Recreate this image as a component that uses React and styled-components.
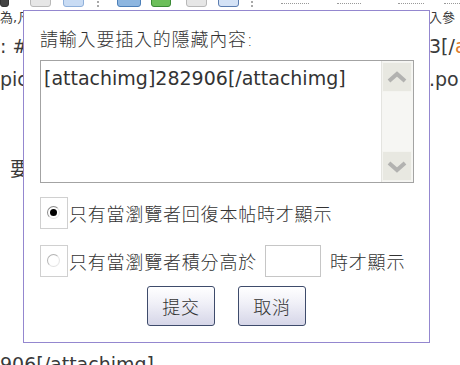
import styled, { createGlobalStyle } from "styled-components";

const GlobalStyle = createGlobalStyle`
  html, body {
    margin: 0;
    padding: 0;
    background: #ffffff;
    overflow: hidden;
  }
  body {
    font-family: "DejaVu Sans", "Noto Sans CJK TC", sans-serif;
    color: #333333;
  }
`;

const Page = styled.div`
  position: relative;
  width: 460px;
  height: 365px;
  overflow: hidden;
  background: #ffffff;
`;

//Background page behind the popup
const Backdrop = styled.div`
  display: flex;
  flex-direction: column;
`;

const Toolbar = styled.div`
  height: 7px;
  display: flex;
  align-items: flex-end;
  overflow: hidden;
`;

const ToolIcon = styled.span`
  flex: none;
  width: ${(p) => p.$w || 20}px;
  height: 18px;
  margin-left: ${(p) => p.$left || 0}px;
  border-radius: 3px;
  background: ${(p) => p.$bg || "#e6e6e6"};
  border: 1px solid ${(p) => p.$line || "#b8b8b8"};
  box-sizing: border-box;
`;

const Dots = styled.span`
  flex: none;
  width: 3px;
  height: 6px;
  margin-left: ${(p) => p.$left || 0}px;
  border-left: 2px dotted #a8a8a8;
`;

const Ticks = styled.span`
  flex: none;
  width: ${(p) => p.$w || 24}px;
  height: 3px;
  margin-left: ${(p) => p.$left || 0}px;
  border-top: 1px dotted #999999;
`;

const Line = styled.div`
  display: grid;
  grid-template-columns: 429px 1fr;
  margin-top: ${(p) => p.$top || 0}px;
  font-size: ${(p) => p.$size || 19}px;
  line-height: ${(p) => p.$lh || 24}px;
  color: #3a3a3a;
  white-space: nowrap;
  overflow: hidden;
`;

const Left = styled.span`
  padding-left: ${(p) => p.$indent || 0}px;
  overflow: hidden;
`;

const Accent = styled.span`
  color: #e07a2a;
`;

//Popup
const Dialog = styled.div`
  position: absolute;
  left: 23px;
  top: 10px;
  width: 407px;
  height: 333px;
  box-sizing: border-box;
  border: 1px solid #9487cf;
  background: #ffffff;
  padding: 17px 16px 0 16px;
  display: flex;
  flex-direction: column;
`;

const Title = styled.div`
  font-size: 18px;
  line-height: 24px;
  letter-spacing: 0.8px;
  font-weight: 300;
  color: #333333;
`;

const Field = styled.div`
  margin-top: 8px;
  width: 374px;
  height: 123px;
  box-sizing: border-box;
  border: 1px solid #a3a3a3;
  display: flex;
`;

const FieldText = styled.div`
  flex: 1;
  padding: 5px 3px;
  font-family: "DejaVu Sans", sans-serif;
  font-size: 19px;
  line-height: 24px;
  color: #333333;
`;

const ScrollBar = styled.div`
  width: 30px;
  padding: 1px 1px 1px 0;
  display: flex;
  flex-direction: column;
  background: #f6f6f3;
  border-left: 1px solid #e4e4e0;
`;

const ScrollButton = styled.div`
  height: 30px;
  box-sizing: border-box;
  background: #e8e8e1;
  border: 1px solid #f4f4f0;
  display: flex;
  align-items: center;
  justify-content: center;
`;

const Track = styled.div`
  flex: 1;
`;

const Option = styled.div`
  display: flex;
  align-items: center;
  margin-top: ${(p) => p.$top}px;
  height: 32px;
  font-size: 18px;
  letter-spacing: 0.8px;
  font-weight: 300;
  color: #333333;
`;

const RadioBox = styled.span`
  flex: none;
  width: 28px;
  height: 32px;
  box-sizing: border-box;
  border: 1px solid #d0d0d0;
  display: flex;
  align-items: center;
  padding: 0 0 2px 6px;
  margin-right: 1px;
`;

const RadioDot = styled.span`
  width: 13px;
  height: 13px;
  box-sizing: border-box;
  border-radius: 50%;
  border: 1px solid ${(p) => (p.$checked ? "#8c8c8c" : "#b4b4b4")};
  border-right-color: #e6e6e6;
  border-bottom-color: #e2e2e2;
  background: radial-gradient(circle, #ffffff 55%, #f0f0f0);
  display: flex;
  align-items: center;
  justify-content: center;

  &::after {
    content: "";
    display: ${(p) => (p.$checked ? "block" : "none")};
    width: 7px;
    height: 7px;
    border-radius: 50%;
    background: #000000;
  }
`;

const ScoreInput = styled.span`
  flex: none;
  width: 56px;
  height: 32px;
  box-sizing: border-box;
  border: 1px solid #c6c6c6;
  margin: 0 9px 0 8px;
`;

const Actions = styled.div`
  margin-top: 9px;
  display: flex;
  justify-content: center;
  gap: 23px;
`;

const Button = styled.button`
  width: 68px;
  height: 40px;
  box-sizing: border-box;
  border: 1px solid #3e4b6b;
  border-radius: 3px;
  background: linear-gradient(#ffffff 0%, #f1f1f8 40%, #d6d6e8 100%);
  font-family: "Noto Sans CJK TC", sans-serif;
  font-size: 18px;
  font-weight: 300;
  letter-spacing: 0.8px;
  color: #333333;
  padding: 0;
`;

function Chevron({ down }) {
  return (
    <svg width="20" height="13" viewBox="0 0 20 13">
      <path
        d={down ? "M2 3 L10 10 L18 3" : "M2 10 L10 3 L18 10"}
        fill="none"
        stroke="#b2b2b0"
        strokeWidth="4"
      />
    </svg>
  );
}

function App() {
  return (
    <Page>
      <GlobalStyle />
      <Backdrop>
        <Toolbar>
          <ToolIcon $w={9} $bg="#444" $line="#333" />
          <ToolIcon $left={21} $w={21} />
          <ToolIcon $left={12} $w={21} $bg="#c9dcf4" $line="#8fb0da" />
          <Dots $left={13} />
          <ToolIcon $left={15} $w={24} $bg="#8db6e0" $line="#4c7fb8" />
          <ToolIcon $left={10} $w={20} $bg="#6cbf5a" $line="#3a8a35" />
          <ToolIcon $left={15} $w={21} />
          <ToolIcon $left={11} $w={21} $bg="#d4e2f6" $line="#5c7db0" />
          <Dots $left={12} />
          <Ticks $left={25} $w={28} />
          <Ticks $left={28} $w={24} />
          <Ticks $left={37} $w={26} />
          <Ticks $left={20} $w={20} />
        </Toolbar>
        <Line $top={3} $size={13} $lh={16}>
          <Left>為,凡</Left>
          <span>入參</span>
        </Line>
        <Line $top={8}>
          <Left>: #9</Left>
          <span>
            3[/<Accent>a</Accent>
          </span>
        </Line>
        <Line $top={9}>
          <Left>pic</Left>
          <span>.po</span>
        </Line>
        <Line $top={66}>
          <Left $indent={10}>要</Left>
          <span />
        </Line>
        <Line $top={171}>
          <Left>906[/attachimg]</Left>
          <span />
        </Line>
      </Backdrop>

      <Dialog>
        <Title>請輸入要插入的隱藏內容:</Title>
        <Field>
          <FieldText>[attachimg]282906[/attachimg]</FieldText>
          <ScrollBar>
            <ScrollButton>
              <Chevron />
            </ScrollButton>
            <Track />
            <ScrollButton>
              <Chevron down />
            </ScrollButton>
          </ScrollBar>
        </Field>
        <Option $top={14}>
          <RadioBox>
            <RadioDot $checked />
          </RadioBox>
          只有當瀏覽者回復本帖時才顯示
        </Option>
        <Option $top={16}>
          <RadioBox>
            <RadioDot />
          </RadioBox>
          只有當瀏覽者積分高於
          <ScoreInput />
          時才顯示
        </Option>
        <Actions>
          <Button>提交</Button>
          <Button>取消</Button>
        </Actions>
      </Dialog>
    </Page>
  );
}

export default App;
